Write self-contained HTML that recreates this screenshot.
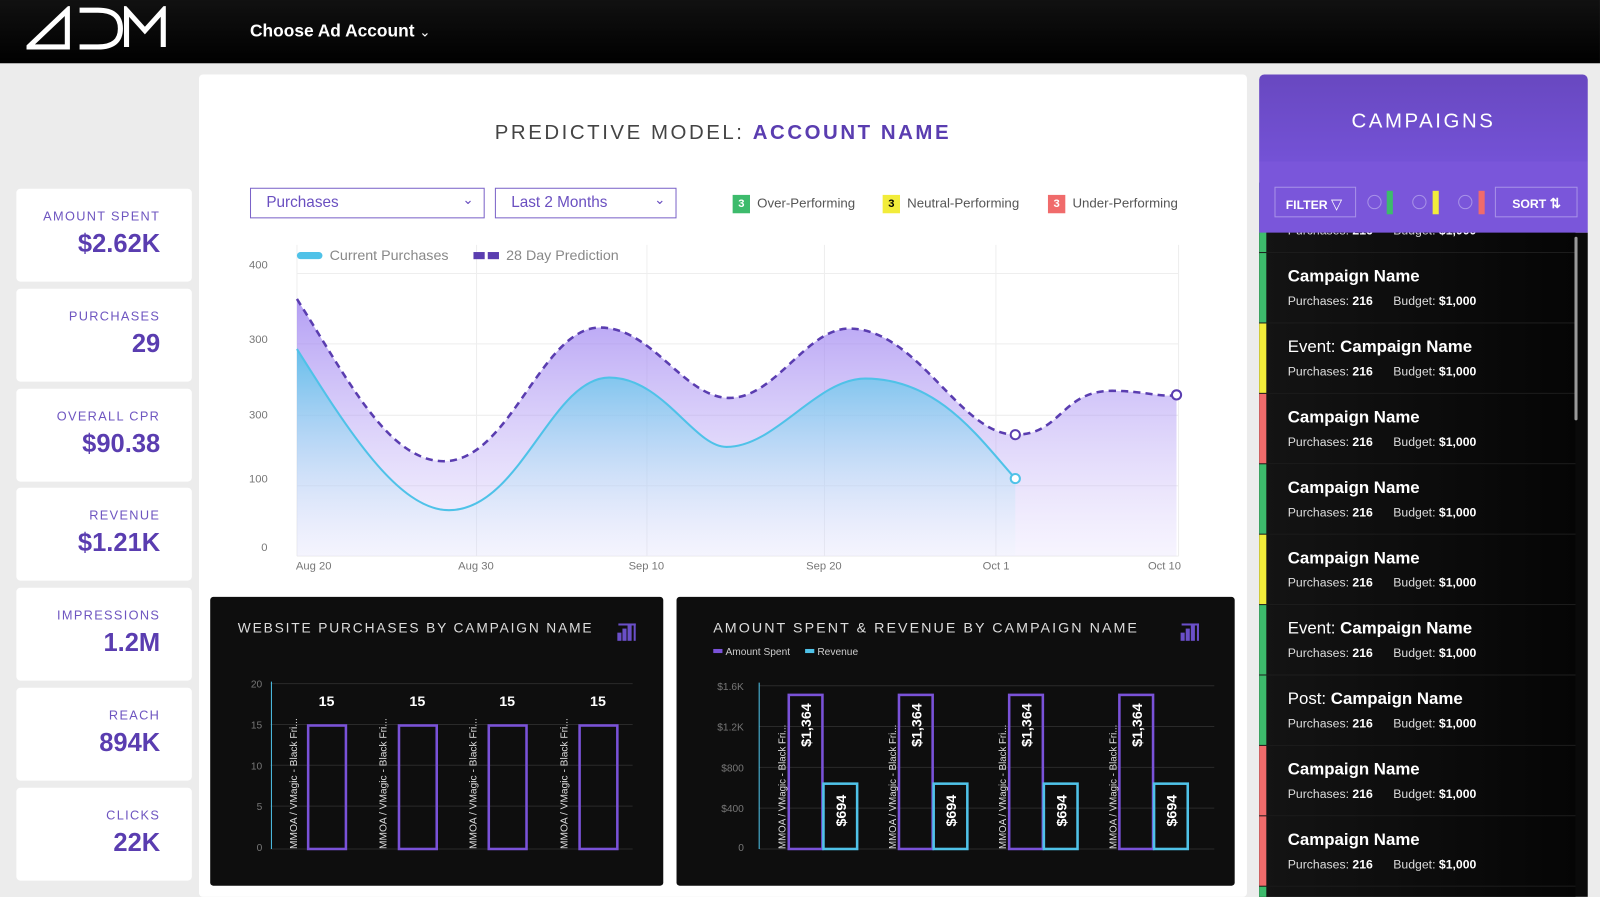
<!DOCTYPE html>
<html><head><meta charset="utf-8"><style>
*{margin:0;padding:0;box-sizing:border-box}
html,body{width:1600px;height:897px;overflow:hidden;background:#ececec;font-family:"Liberation Sans",sans-serif}
#w{position:absolute;left:0;top:0;width:1568px;height:879px;overflow:hidden;transform:scale(1.0204);transform-origin:0 0;background:#ececec}
.a{position:absolute}
.card{position:absolute;left:16px;width:172px;height:91px;background:#fff;border-radius:4px;text-align:right;padding-right:31px}
.card .l{margin-top:20px;font-size:12.5px;letter-spacing:1.3px;color:#6e55c0}
.card .v{margin-top:6px;font-size:25px;font-weight:bold;color:#5a3db0}
.row{position:absolute;left:1234px;width:310px;height:69px;border-bottom:1px solid #1e1e1e;background:linear-gradient(90deg,#141414,#050505)}
.row .bar{position:absolute;left:0;top:0;width:7px;height:100%}
.row .n{position:absolute;left:28px;top:14px;font-size:16.5px;color:#fff;font-weight:bold}
.row .n span{font-weight:normal}
.row .s{position:absolute;left:28px;top:40px;font-size:12px;color:#ddd}
.row .s b{color:#fff}
.sel{position:absolute;top:184px;height:30px;border:1.5px solid #7b63c8;color:#6a4fc0;font-size:15px;padding:5px 15px}
.badge{display:inline-block;width:17px;height:18px;font-size:11px;text-align:center;line-height:18px;font-weight:bold;margin-right:7px;vertical-align:middle}
.leg{position:absolute;top:191px;font-size:13px;color:#555}
</style></head><body><div id="w">
<div class="a" style="left:0;top:0;width:1568px;height:62px;background:linear-gradient(#111,#000)"></div>
<svg class="a" style="left:26px;top:6px" width="140" height="44" viewBox="0 0 140 44"><g fill="none" stroke="#fff" stroke-width="5"><path d="M2,40 L40,4 L40,40 Z"/><path d="M52,4 H70 Q92,4 92,22 Q92,40 70,40 H52"/><path d="M98,40 V4 L116,24 L134,4 V40"/></g></svg>
<div class="a" style="left:245px;top:21px;color:#fff;font-size:17px;font-weight:bold">Choose Ad Account <span style="font-weight:normal;font-size:13px">&#8964;</span></div>

<div class="card" style="top:185px"><div class="l">AMOUNT SPENT</div><div class="v">$2.62K</div></div>
<div class="card" style="top:283px"><div class="l">PURCHASES</div><div class="v">29</div></div>
<div class="card" style="top:381px"><div class="l">OVERALL CPR</div><div class="v">$90.38</div></div>
<div class="card" style="top:478px"><div class="l">REVENUE</div><div class="v">$1.21K</div></div>
<div class="card" style="top:576px"><div class="l">IMPRESSIONS</div><div class="v">1.2M</div></div>
<div class="card" style="top:674px"><div class="l">REACH</div><div class="v">894K</div></div>
<div class="card" style="top:772px"><div class="l">CLICKS</div><div class="v">22K</div></div>

<div class="a" style="left:195px;top:73px;width:1027px;height:806px;background:#fff;border-radius:4px"></div>
<div class="a" style="left:195px;top:119px;width:1027px;text-align:center;font-size:20px;letter-spacing:2.5px;color:#444">PREDICTIVE MODEL: <b style="color:#5a3db0">ACCOUNT NAME</b></div>
<div class="sel" style="left:245px;width:230px">Purchases<span style="position:absolute;right:10px;top:3px;font-size:13px">&#8964;</span></div>
<div class="sel" style="left:485px;width:178px">Last 2 Months<span style="position:absolute;right:10px;top:3px;font-size:13px">&#8964;</span></div>
<div class="leg" style="left:718px"><span class="badge" style="background:#3dbb6c;color:#fff">3</span>Over-Performing</div>
<div class="leg" style="left:865px"><span class="badge" style="background:#f2ec3a;color:#000">3</span>Neutral-Performing</div>
<div class="leg" style="left:1027px"><span class="badge" style="background:#f06b6b;color:#fff">3</span>Under-Performing</div>

<svg class="a" style="left:0;top:0" width="1568" height="879">
<defs>
<linearGradient id="gp" x1="0" y1="0" x2="0" y2="1"><stop offset="0" stop-color="#9a7ef0" stop-opacity=".75"/><stop offset="1" stop-color="#c8b8f8" stop-opacity=".15"/></linearGradient>
<linearGradient id="gb" x1="0" y1="0" x2="0" y2="1"><stop offset="0" stop-color="#4fc2e8" stop-opacity=".8"/><stop offset="1" stop-color="#dff3fb" stop-opacity=".1"/></linearGradient>
</defs>
<g stroke="#eee" stroke-width="1">
<line x1="291" y1="268" x2="1155" y2="268"/><line x1="291" y1="337" x2="1155" y2="337"/><line x1="291" y1="407" x2="1155" y2="407"/><line x1="291" y1="476" x2="1155" y2="476"/><line x1="291" y1="545" x2="1155" y2="545"/>
<line x1="291" y1="240" x2="291" y2="545"/><line x1="467" y1="240" x2="467" y2="545"/><line x1="634" y1="240" x2="634" y2="545"/><line x1="808" y1="240" x2="808" y2="545"/><line x1="976" y1="240" x2="976" y2="545"/><line x1="1155" y1="240" x2="1155" y2="545"/>
</g>
<g font-size="11" fill="#777"><text x="244" y="263">400</text><text x="244" y="336">300</text><text x="244" y="410">300</text><text x="244" y="473">100</text><text x="256" y="540">0</text>
<text x="290" y="558">Aug 20</text><text x="449" y="558">Aug 30</text><text x="616" y="558">Sep 10</text><text x="790" y="558">Sep 20</text><text x="963" y="558">Oct 1</text><text x="1125" y="558">Oct 10</text></g>
<rect x="291" y="247" width="25" height="7" rx="3.5" fill="#4fc2e8"/><text x="323" y="255" font-size="14" fill="#888">Current Purchases</text>
<rect x="464" y="247" width="11" height="7" fill="#5a3db0"/><rect x="478" y="247" width="11" height="7" fill="#5a3db0"/><text x="496" y="255" font-size="14" fill="#888">28 Day Prediction</text>
<path d="M291,293 C340,370 380,452 435,452 C500,452 530,321 588,321 C640,321 670,390 715,390 C760,390 790,322 832,322 C900,322 940,426 995,426 C1040,426 1040,383 1090,383 C1120,383 1140,390 1153,387 L1153,545 L291,545 Z" fill="url(#gp)"/>
<path d="M291,342 C340,420 390,500 440,500 C510,500 540,370 597,370 C650,370 680,438 712,438 C760,438 800,371 848,371 C920,371 960,430 995,469 L995,545 L291,545 Z" fill="url(#gb)"/>
<path d="M291,293 C340,370 380,452 435,452 C500,452 530,321 588,321 C640,321 670,390 715,390 C760,390 790,322 832,322 C900,322 940,426 995,426 C1040,426 1040,383 1090,383 C1120,383 1140,390 1153,387" fill="none" stroke="#5a3db0" stroke-width="2.5" stroke-dasharray="7,5"/>
<path d="M291,342 C340,420 390,500 440,500 C510,500 540,370 597,370 C650,370 680,438 712,438 C760,438 800,371 848,371 C920,371 960,430 995,469" fill="none" stroke="#4fc2e8" stroke-width="2"/>
<circle cx="995" cy="426" r="4.5" fill="#fff" stroke="#5a3db0" stroke-width="2"/><circle cx="1153" cy="387" r="4.5" fill="#fff" stroke="#5a3db0" stroke-width="2"/><circle cx="995" cy="469" r="4.5" fill="#fff" stroke="#4fc2e8" stroke-width="2"/>

<rect x="206" y="585" width="444" height="283" rx="3" fill="#0e0e0e"/>
<text x="233" y="620" font-size="13.5" fill="#ddd" letter-spacing="1.8">WEBSITE PURCHASES BY CAMPAIGN NAME</text>
<g fill="#6a4fc8"><rect x="605" y="620" width="4" height="8"/><rect x="610" y="616" width="4" height="12"/><rect x="615" y="612" width="4" height="16"/><rect x="606" y="611" width="17" height="2"/><rect x="621" y="611" width="2" height="17"/></g>
<g stroke="#2a2a2a"><line x1="265" y1="670" x2="620" y2="670"/><line x1="265" y1="710" x2="620" y2="710"/><line x1="265" y1="750" x2="620" y2="750"/><line x1="265" y1="790" x2="620" y2="790"/><line x1="265" y1="832" x2="620" y2="832"/></g>
<line x1="266" y1="668" x2="266" y2="832" stroke="#4fc2e8"/>
<g font-size="10" fill="#777" text-anchor="end"><text x="257" y="674">20</text><text x="257" y="714">15</text><text x="257" y="754">10</text><text x="257" y="794">5</text><text x="257" y="834">0</text></g>
<g fill="none" stroke="#7a52d8" stroke-width="2.5"><rect x="302" y="711" width="37" height="121"/><rect x="391" y="711" width="37" height="121"/><rect x="479" y="711" width="37" height="121"/><rect x="568" y="711" width="37" height="121"/></g>
<g font-size="14" font-weight="bold" fill="#fff" text-anchor="middle"><text x="320" y="692">15</text><text x="409" y="692">15</text><text x="497" y="692">15</text><text x="586" y="692">15</text></g>
<g font-size="10" fill="#ddd"><text transform="translate(291,832) rotate(-90)">MMOA / VMagic - Black Fri...</text><text transform="translate(379,832) rotate(-90)">MMOA / VMagic - Black Fri...</text><text transform="translate(467,832) rotate(-90)">MMOA / VMagic - Black Fri...</text><text transform="translate(556,832) rotate(-90)">MMOA / VMagic - Black Fri...</text></g>

<rect x="663" y="585" width="547" height="283" rx="3" fill="#0e0e0e"/>
<text x="699" y="620" font-size="14" fill="#ddd" letter-spacing="2">AMOUNT SPENT &amp; REVENUE BY CAMPAIGN NAME</text>
<g fill="#6a4fc8"><rect x="1157" y="620" width="4" height="8"/><rect x="1162" y="616" width="4" height="12"/><rect x="1167" y="612" width="4" height="16"/><rect x="1158" y="611" width="17" height="2"/><rect x="1173" y="611" width="2" height="17"/></g>
<rect x="699" y="636" width="9" height="4" fill="#7a52d8"/><text x="711" y="642" font-size="10" fill="#ccc">Amount Spent</text>
<rect x="789" y="636" width="9" height="4" fill="#4fc2e8"/><text x="801" y="642" font-size="10" fill="#ccc">Revenue</text>
<g stroke="#2a2a2a"><line x1="744" y1="672" x2="1190" y2="672"/><line x1="744" y1="712" x2="1190" y2="712"/><line x1="744" y1="752" x2="1190" y2="752"/><line x1="744" y1="792" x2="1190" y2="792"/><line x1="744" y1="832" x2="1190" y2="832"/></g>
<line x1="744" y1="669" x2="744" y2="832" stroke="#4fc2e8"/>
<g font-size="10" fill="#777" text-anchor="end"><text x="729" y="676">$1.6K</text><text x="729" y="716">$1.2K</text><text x="729" y="756">$800</text><text x="729" y="796">$400</text><text x="729" y="834">0</text></g>
<g stroke-width="2.5" fill="none">
<g stroke="#7a52d8"><rect x="773" y="681" width="33" height="151"/><rect x="881" y="681" width="33" height="151"/><rect x="989" y="681" width="33" height="151"/><rect x="1097" y="681" width="33" height="151"/></g>
<g stroke="#4fc2e8"><rect x="807" y="768" width="33" height="64"/><rect x="915" y="768" width="33" height="64"/><rect x="1023" y="768" width="33" height="64"/><rect x="1131" y="768" width="33" height="64"/></g>
</g>
<g font-size="14" font-weight="bold" fill="#fff">
<text transform="translate(795,732) rotate(-90)">$1,364</text><text transform="translate(903,732) rotate(-90)">$1,364</text><text transform="translate(1011,732) rotate(-90)">$1,364</text><text transform="translate(1119,732) rotate(-90)">$1,364</text>
<text transform="translate(829,810) rotate(-90)">$694</text><text transform="translate(937,810) rotate(-90)">$694</text><text transform="translate(1045,810) rotate(-90)">$694</text><text transform="translate(1153,810) rotate(-90)">$694</text></g>
<g font-size="9.5" fill="#ddd"><text transform="translate(770,832) rotate(-90)">MMOA / VMagic - Black Fri...</text><text transform="translate(878,832) rotate(-90)">MMOA / VMagic - Black Fri...</text><text transform="translate(986,832) rotate(-90)">MMOA / VMagic - Black Fri...</text><text transform="translate(1094,832) rotate(-90)">MMOA / VMagic - Black Fri...</text></g>
</svg>

<div class="a" style="left:1234px;top:228px;width:322px;height:651px;background:#0a0a0a"></div>
<div class="row" style="top:179px;height:69px"><div class="bar" style="background:#3dbb6c"></div><div class="s" style="top:40px">Purchases: <b>216</b> &nbsp;&nbsp;&nbsp;&nbsp; Budget: <b>$1,000</b></div></div>
<div class="row" style="top:248px"><div class="bar" style="background:#3dbb6c"></div><div class="n">Campaign Name</div><div class="s">Purchases: <b>216</b> &nbsp;&nbsp;&nbsp;&nbsp; Budget: <b>$1,000</b></div></div>
<div class="row" style="top:317px"><div class="bar" style="background:#f2ec3a"></div><div class="n"><span>Event: </span>Campaign Name</div><div class="s">Purchases: <b>216</b> &nbsp;&nbsp;&nbsp;&nbsp; Budget: <b>$1,000</b></div></div>
<div class="row" style="top:386px"><div class="bar" style="background:#f06b6b"></div><div class="n">Campaign Name</div><div class="s">Purchases: <b>216</b> &nbsp;&nbsp;&nbsp;&nbsp; Budget: <b>$1,000</b></div></div>
<div class="row" style="top:455px"><div class="bar" style="background:#3dbb6c"></div><div class="n">Campaign Name</div><div class="s">Purchases: <b>216</b> &nbsp;&nbsp;&nbsp;&nbsp; Budget: <b>$1,000</b></div></div>
<div class="row" style="top:524px"><div class="bar" style="background:#f2ec3a"></div><div class="n">Campaign Name</div><div class="s">Purchases: <b>216</b> &nbsp;&nbsp;&nbsp;&nbsp; Budget: <b>$1,000</b></div></div>
<div class="row" style="top:593px"><div class="bar" style="background:#3dbb6c"></div><div class="n"><span>Event: </span>Campaign Name</div><div class="s">Purchases: <b>216</b> &nbsp;&nbsp;&nbsp;&nbsp; Budget: <b>$1,000</b></div></div>
<div class="row" style="top:662px"><div class="bar" style="background:#3dbb6c"></div><div class="n"><span>Post: </span>Campaign Name</div><div class="s">Purchases: <b>216</b> &nbsp;&nbsp;&nbsp;&nbsp; Budget: <b>$1,000</b></div></div>
<div class="row" style="top:731px"><div class="bar" style="background:#f06b6b"></div><div class="n">Campaign Name</div><div class="s">Purchases: <b>216</b> &nbsp;&nbsp;&nbsp;&nbsp; Budget: <b>$1,000</b></div></div>
<div class="row" style="top:800px"><div class="bar" style="background:#f06b6b"></div><div class="n">Campaign Name</div><div class="s">Purchases: <b>216</b> &nbsp;&nbsp;&nbsp;&nbsp; Budget: <b>$1,000</b></div></div>
<div class="row" style="top:869px;height:10px;border:0"><div class="bar" style="background:#3dbb6c"></div></div>
<div class="a" style="left:1543px;top:232px;width:3px;height:180px;background:#999;border-radius:2px"></div>

<div class="a" style="left:1234px;top:73px;width:322px;height:155px;border-radius:5px 5px 0 0;background:linear-gradient(#6848c0,#7452d6 55%,#7a56da 55%,#7a56da)"></div>
<div class="a" style="left:1234px;top:108px;width:322px;text-align:center;color:#fff;font-size:20px;letter-spacing:2.5px">CAMPAIGNS</div>
<div class="a" style="left:1249px;top:183px;width:80px;height:30px;border:1px solid #a892e8;color:#fff;font-size:12px;font-weight:bold;padding:8px 0 0 10px">FILTER <span style="font-weight:normal;font-size:14px">&#9661;</span></div>
<div class="a" style="left:1340px;top:191px;width:14px;height:14px;border:1px solid #a892e8;border-radius:50%"></div><div class="a" style="left:1359px;top:187px;width:6px;height:23px;background:#3dbb6c"></div>
<div class="a" style="left:1384px;top:191px;width:14px;height:14px;border:1px solid #a892e8;border-radius:50%"></div><div class="a" style="left:1404px;top:187px;width:6px;height:23px;background:#f2ec3a"></div>
<div class="a" style="left:1429px;top:191px;width:14px;height:14px;border:1px solid #a892e8;border-radius:50%"></div><div class="a" style="left:1449px;top:187px;width:6px;height:23px;background:#f06b6b"></div>
<div class="a" style="left:1465px;top:183px;width:81px;height:30px;border:1px solid #a892e8;color:#fff;font-size:12px;font-weight:bold;padding:8px 0 0 16px">SORT <span style="font-size:13px">&#8645;</span></div>
</div></body></html>
